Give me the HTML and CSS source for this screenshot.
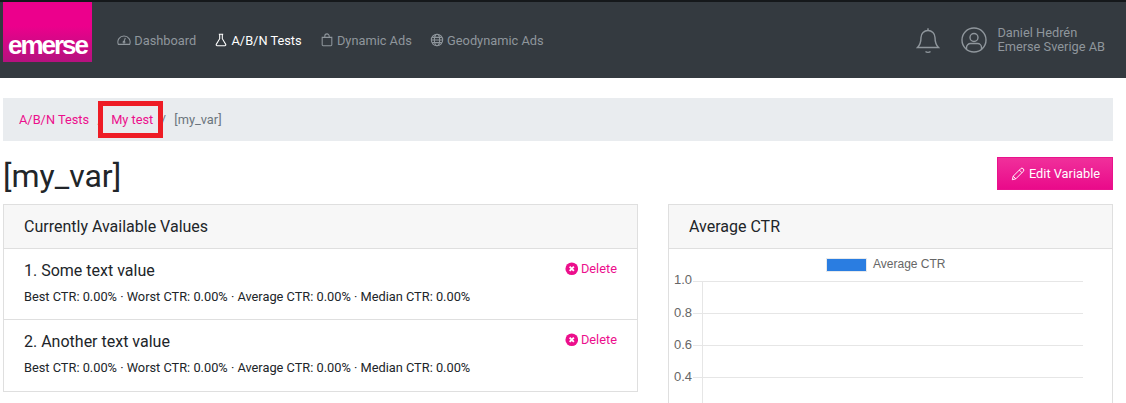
FILE: index.html
```html
<!DOCTYPE html>
<html>
	<head>
		<meta charset="UTF-8">
		<title>[my_var]</title>
		<link rel="stylesheet" href="styles.css">
	</head>
	<body>
		<div class="topbar">
			<div class="logo"><span>emerse</span></div>
			<ul class="nav">
				<li>
					<svg class="nav-icon" viewBox="0 0 16 16"><path d="M1.500 13a7 7 0 1 1 13 0z"/><path d="M8 10l1.500-4.500"/><circle cx="8" cy="10.500" r="1"/></svg>
					Dashboard
				</li>
				<li class="active">
					<svg class="nav-icon" viewBox="0 0 16 16"><path d="M5.500 1.500h5M6.500 1.500v5L2.600 13a1 1 0 0 0 .9 1.500h9a1 1 0 0 0 .9-1.500L9.500 6.500v-5"/></svg>
					A/B/N Tests
				</li>
				<li>
					<svg class="nav-icon" viewBox="0 0 16 16"><path d="M2.500 5h11v8.500a1 1 0 0 1-1 1h-9a1 1 0 0 1-1-1z"/><path d="M5.500 5V3.500a2.500 2.500 0 0 1 5 0V5"/></svg>
					Dynamic Ads
				</li>
				<li>
					<svg class="nav-icon" viewBox="0 0 16 16"><circle cx="8" cy="8" r="6.500"/><ellipse cx="8" cy="8" rx="3" ry="6.500"/><path d="M1.500 8h13M2.400 5h11.200M2.400 11h11.200"/></svg>
					Geodynamic Ads
				</li>
			</ul>
			<div class="account">
				<svg class="bell" viewBox="0 0 24 27"><path d="M12 3.500a7 7 0 0 0-7 7c0 6-1.500 8-3.500 10h21c-2-2-3.500-4-3.500-10a7 7 0 0 0-7-7z"/><path d="M12 3.500V1.200M9.500 24.500a3 2 0 0 0 5 0"/></svg>
				<svg class="user" viewBox="0 0 26 26"><circle cx="13" cy="13" r="12"/><circle cx="13" cy="10.500" r="4"/><path d="M5.500 22v-1.500a4 4 0 0 1 4-4h7a4 4 0 0 1 4 4V22"/></svg>
				<div class="account-name">Daniel Hedrén<br>Emerse Sverige AB</div>
			</div>
		</div>

		<div class="content">
			<div class="crumbs">
				<a>A/B/N Tests</a>
				<span class="sep">/</span>
				<a>My test</a>
				<span class="sep sep-last">/</span>
				<span>[my_var]</span>
				<div class="marker"></div>
			</div>

			<div class="title-row">
				<h1>[my_var]</h1>
				<button class="edit-btn">
					<svg viewBox="0 0 16 16"><path d="M1.500 14.500l1-4L11 2a1.800 1.800 0 0 1 3 3l-8.500 8.500z"/><path d="M9.500 3.500l3 3M2.500 10.500l3 3"/></svg>
					Edit Variable
				</button>
			</div>

			<div class="columns">
				<div class="card card-values">
					<div class="card-head">Currently Available Values</div>
					<div class="value">
						<div class="value-top">
							<h2>1. Some text value</h2>
							<a class="delete">
								<svg viewBox="0 0 16 16"><circle cx="8" cy="8" r="7.500"/><path class="cross" d="M5.500 5.500l5 5M10.500 5.500l-5 5"/></svg>
								Delete
							</a>
						</div>
						<p>Best CTR: 0.00% · Worst CTR: 0.00% · Average CTR: 0.00% · Median CTR: 0.00%</p>
					</div>
					<div class="value">
						<div class="value-top">
							<h2>2. Another text value</h2>
							<a class="delete">
								<svg viewBox="0 0 16 16"><circle cx="8" cy="8" r="7.500"/><path class="cross" d="M5.500 5.500l5 5M10.500 5.500l-5 5"/></svg>
								Delete
							</a>
						</div>
						<p>Best CTR: 0.00% · Worst CTR: 0.00% · Average CTR: 0.00% · Median CTR: 0.00%</p>
					</div>
				</div>

				<div class="card card-chart">
					<div class="card-head">Average CTR</div>
					<svg class="chart" width="443" height="154" viewBox="0 0 443 154">
						<rect class="legend-box" x="157.500" y="9.500" width="40" height="13"/>
						<text x="204" y="19">Average CTR</text>
						<path class="grid" d="M33.500 32V154M24 32.500H414M24 64.500H414M24 96.500H414M24 128.500H414"/>
						<text class="tick" x="23" y="35">1.0</text>
						<text class="tick" x="23" y="68">0.8</text>
						<text class="tick" x="23" y="100">0.6</text>
						<text class="tick" x="23" y="132">0.4</text>
					</svg>
				</div>
			</div>
		</div>
	</body>
</html>
```

FILE: styles.css
```css
* {
	margin: 0;
	padding: 0;
	box-sizing: border-box;
}
html, body {
	height: 403px;
	overflow: hidden;
}
body {
	font-family: Roboto, "Liberation Sans", sans-serif;
	font-size: 12.800px;
	color: #212529;
	background: #fff;
}
ul, li {
	list-style: none;
}

.topbar {
	height: 78px;
	background: #343a40;
	border-top: 2px solid #15181b;
	display: flex;
	align-items: flex-start;
	padding: 0 21px 0 3px;
}
.logo {
	width: 89px;
	height: 60px;
	background: linear-gradient(#ec008c 40%, #b5127f);
	display: flex;
	align-items: flex-end;
	justify-content: center;
	padding-bottom: 1px;
}
.logo span {
	font-family: "Liberation Sans", sans-serif;
	font-weight: bold;
	font-size: 26px;
	letter-spacing: -2px;
	color: #fff;
}
.nav {
	display: flex;
	gap: 18px;
	margin-left: 25px;
	height: 76px;
	align-items: center;
	color: #8f969c;
}
.nav li {
	display: flex;
	align-items: center;
	gap: 3.300px;
}
.nav .active {
	color: #fff;
}
.nav-icon {
	width: 14px;
	height: 14px;
	fill: none;
	stroke: currentColor;
	stroke-width: 1.200;
}

.account {
	margin-left: auto;
	height: 76px;
	display: flex;
	align-items: center;
	color: #8f969c;
}
.bell {
	width: 24px;
	height: 27px;
	fill: none;
	stroke: currentColor;
	stroke-width: 1.400;
	margin-right: 21px;
}
.user {
	width: 26px;
	height: 26px;
	fill: none;
	stroke: currentColor;
	stroke-width: 1.400;
	margin-right: 10px;
}
.account-name {
	line-height: 14px;
	font-size: 12.800px;
}

.content {
	padding: 20px 13px 0 3px;
}
.crumbs {
	position: relative;
	height: 43px;
	background: #e9ecef;
	display: flex;
	align-items: center;
	padding-left: 16px;
	color: #6c757d;
}
.crumbs a {
	color: #ec0f8c;
}
.sep {
	width: 22px;
	text-align: center;
}
.sep-last {
	width: 21px;
	padding-right: 1px;
}
.marker {
	position: absolute;
	left: 95px;
	top: 3px;
	width: 65px;
	height: 37px;
	border: 5px solid #ee1c25;
}

.title-row {
	display: flex;
	justify-content: space-between;
	align-items: flex-start;
	padding-top: 16px;
	height: 63px;
}
h1 {
	font-size: 32px;
	font-weight: 400;
	line-height: 38px;
}
.edit-btn {
	width: 116px;
	height: 33px;
	border: 1px solid #e9128c;
	padding-left: 1px;
	background: linear-gradient(#f0309b, #ea0a8a);
	color: #fff;
	font-family: inherit;
	font-size: 12.800px;
	display: flex;
	align-items: center;
	justify-content: center;
	gap: 4px;
}
.edit-btn svg {
	width: 14px;
	height: 14px;
	fill: none;
	stroke: #fff;
	stroke-width: 1.100;
}

.columns {
	display: flex;
	gap: 30px;
	align-items: flex-start;
}
.card {
	border: 1px solid #dfdfdf;
	background: #fff;
}
.card-values {
	width: 635px;
}
.card-chart {
	width: 445px;
}
.card-head {
	height: 44px;
	padding: 0 20px;
	line-height: 43px;
	font-size: 16px;
	background: #f7f7f7;
	border-bottom: 1px solid #dfdfdf;
}
.value {
	height: 71px;
	padding: 12px 20px 0;
	border-bottom: 1px solid #dfdfdf;
}
.value:last-child {
	border-bottom: none;
}
.value-top {
	display: flex;
	justify-content: space-between;
	align-items: flex-start;
}
h2 {
	font-size: 16px;
	font-weight: 400;
	line-height: 20px;
}
.value p {
	font-size: 12.800px;
	line-height: 16px;
	margin-top: 8px;
}
.delete {
	display: flex;
	align-items: center;
	gap: 2.500px;
	color: #ec0f8c;
	line-height: 16px;
}
.delete svg {
	width: 13.500px;
	height: 13.500px;
	fill: #ec0f8c;
}
.delete .cross {
	fill: none;
	stroke: #fff;
	stroke-width: 2.200;
}

.chart {
	display: block;
}
.chart text {
	font-family: "Liberation Sans", sans-serif;
	font-size: 12px;
	fill: #666;
}
.chart .tick {
	text-anchor: end;
	font-size: 13px;
}
.legend-box {
	fill: #2a7de1;
	stroke: #e6e9ec;
}
.grid {
	fill: none;
	stroke: #e6e6e6;
}
```
